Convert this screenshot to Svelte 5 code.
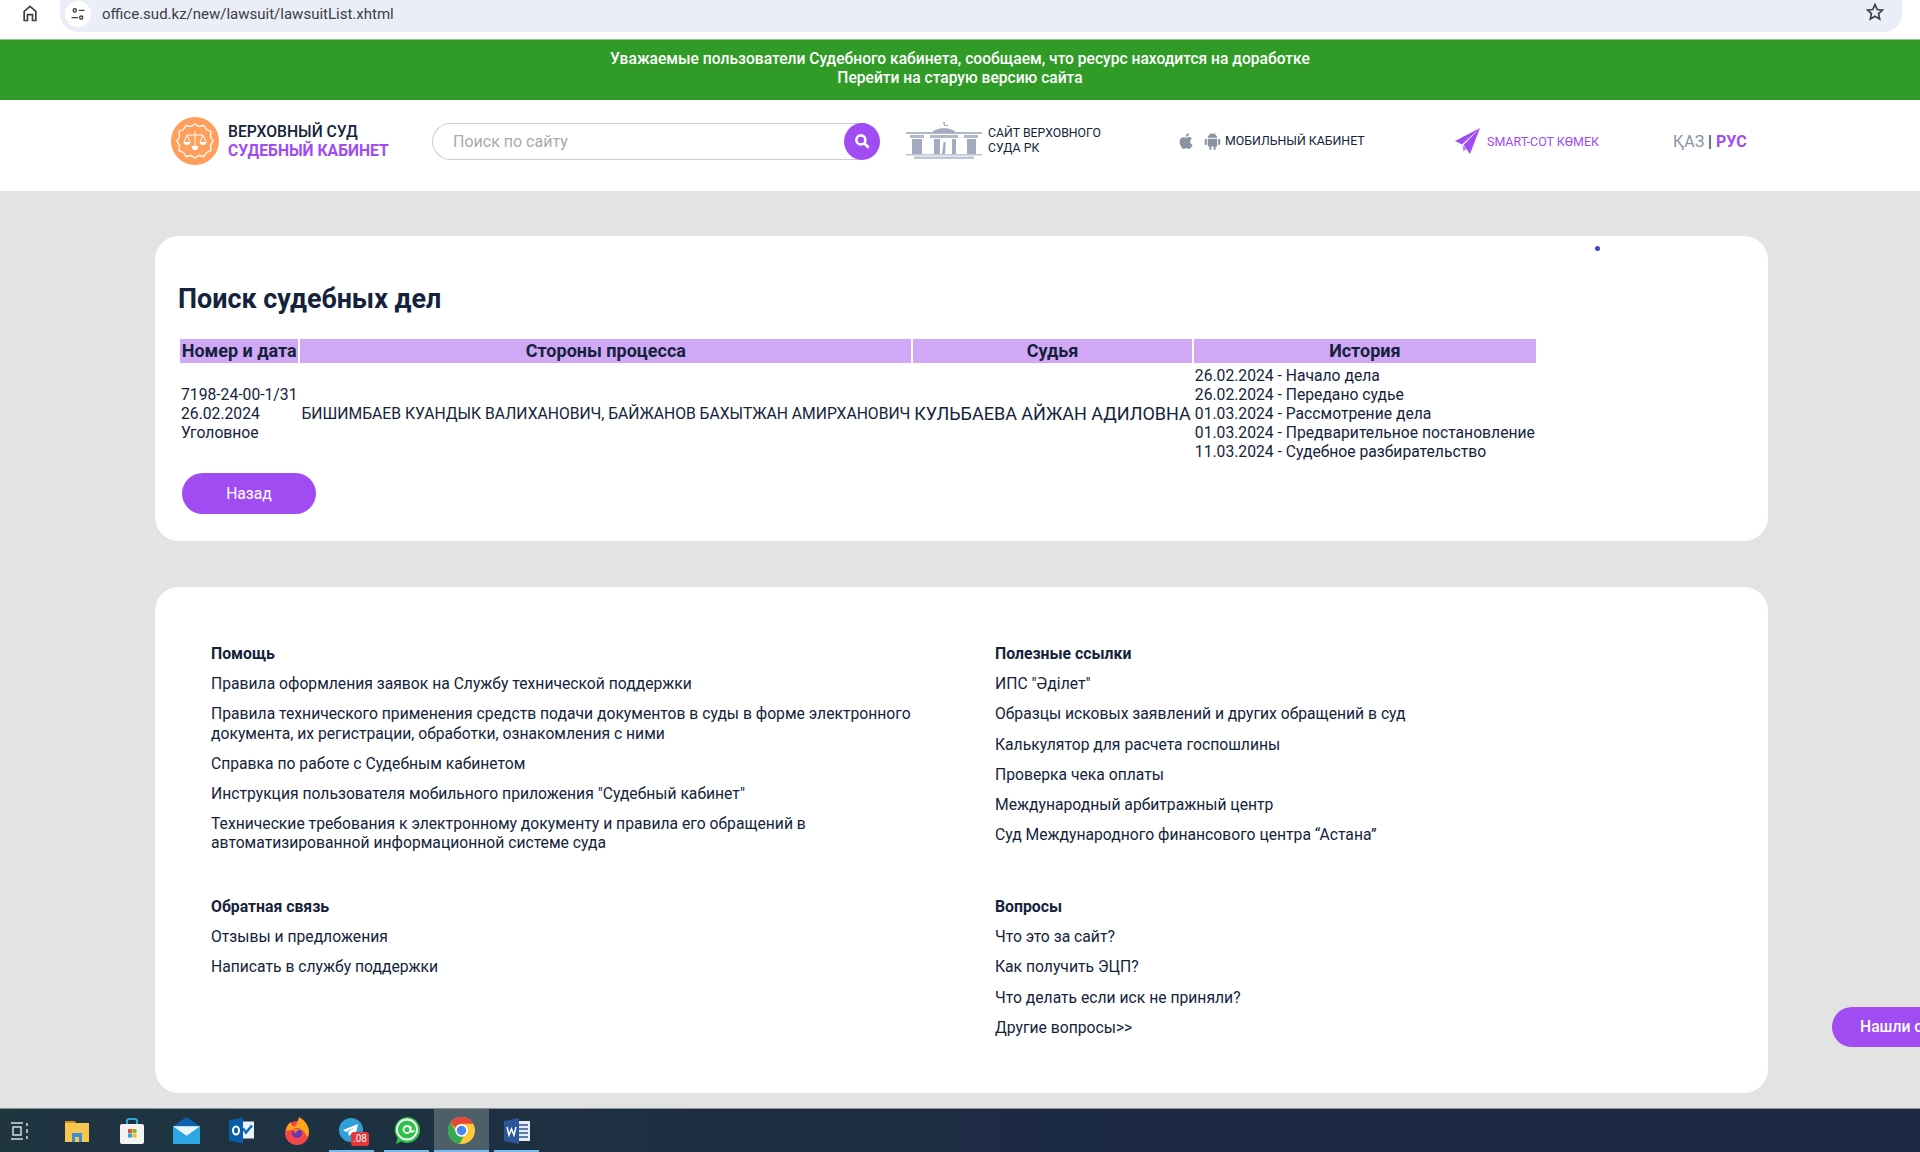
<script lang="ts">
  const help = [
    "Правила оформления заявок на Службу технической поддержки",
    "Правила технического применения средств подачи документов в суды в форме электронного документа, их регистрации, обработки, ознакомления с ними",
    "Справка по работе с Судебным кабинетом",
    'Инструкция пользователя мобильного приложения "Судебный кабинет"',
    "Технические требования к электронному документу и правила его обращений в автоматизированной информационной системе суда",
  ];
  const useful = [
    'ИПС "Әділет"',
    "Образцы исковых заявлений и других обращений в суд",
    "Калькулятор для расчета госпошлины",
    "Проверка чека оплаты",
    "Международный арбитражный центр",
    "Суд Международного финансового центра “Астана”",
  ];
  const feedback = ["Отзывы и предложения", "Написать в службу поддержки"];
  const questions = [
    "Что это за сайт?",
    "Как получить ЭЦП?",
    "Что делать если иск не приняли?",
    "Другие вопросы>>",
  ];
  const sections = [
    { title: "Помощь", links: help },
    { title: "Полезные ссылки", links: useful },
    { title: "Обратная связь", links: feedback },
    { title: "Вопросы", links: questions },
  ];
  const history = [
    "26.02.2024 - Начало дела",
    "26.02.2024 - Передано судье",
    "01.03.2024 - Рассмотрение дела",
    "01.03.2024 - Предварительное постановление",
    "11.03.2024 - Судебное разбирательство",
  ];
</script>

<div class="page">
  <div class="browser">
    <svg class="home" viewBox="0 0 24 24" width="20" height="20" fill="none" stroke="#3c4043" stroke-width="2">
      <path d="M5 21V10l7-6 7 6v11h-4v-7H9v7z" />
    </svg>
    <div class="address">
      <span class="site">
        <svg viewBox="0 0 20 20" width="16" height="16" fill="none" stroke="#3c4043" stroke-width="1.7">
          <circle cx="6" cy="5.5" r="2" />
          <path d="M11 5.500h7M2 14.500h8" />
          <circle cx="14" cy="14.5" r="2" />
        </svg>
      </span>
      <span class="url">office.sud.kz/new/lawsuit/lawsuitList.xhtml</span>
      <svg class="star" viewBox="0 0 24 24" width="20" height="20" fill="none" stroke="#3c4043" stroke-width="2">
        <path d="M12 3l2.700 6 6.300.7-4.700 4.300 1.300 6.400L12 17.200 6.400 20.400 7.700 14 3 9.700 9.300 9z" />
      </svg>
    </div>
  </div>

  <div class="banner">
    <div>Уважаемые пользователи Судебного кабинета, сообщаем, что ресурс находится на доработке</div>
    <div>Перейти на старую версию сайта</div>
  </div>

  <header>
    <svg class="logo" viewBox="0 0 48 48" width="48" height="48">
      <circle cx="24" cy="24" r="24" fill="#ff9f5c" />
      <path d="M24 7l4 2.500 5-1 2.500 4 4.500 2-.5 5L42 24l-2.500 4.500.5 5-4.500 2-2.500 4-5-1L24 41l-4-2.500-5 1-2.500-4-4.500-2 .5-5L6 24l2.500-4.500-.5-5 4.500-2 2.500-4 5 1z" fill="none" stroke="#fff" stroke-width="1.300" />
      <path d="M24 14v15M16 18h16M16 18l-3 7M16 18l3 7M32 18l-3 7M32 18l3 7" fill="none" stroke="#fff" stroke-width="1" />
      <path d="M12.500 25h7a3.500 3 0 0 1-7 0zM28.500 25h7a3.500 3 0 0 1-7 0zM20.500 29h7l-1.500 4h-4z" fill="#fff" />
    </svg>
    <div class="brand">
      <div>ВЕРХОВНЫЙ СУД</div>
      <div class="accent">СУДЕБНЫЙ КАБИНЕТ</div>
    </div>
    <div class="search">
      <span class="placeholder">Поиск по сайту</span>
      <span class="search-btn">
        <svg viewBox="0 0 24 24" width="18" height="18" fill="none" stroke="#fff" stroke-width="3.500">
          <circle cx="10.500" cy="10.500" r="6" />
          <path d="M15 15l6 6" />
        </svg>
      </span>
    </div>
    <svg class="building" viewBox="0 0 76 38" width="76" height="38" fill="#a3abc0">
      <path d="M37 0h2v3h3v1h-4zM27 9q11-6 22 0v2H27z" />
      <path d="M0 10h76v2H0zM4 13h14v3H4zM24 13h28v3H24zM58 13h14v3H58z" opacity=".85" />
      <path d="M6 17h10v15H6zM28 17h6v15h-6zM46 17h4v15h-4zM61 17h9v15h-9z" />
      <path d="M37.500 20h2v5l-.5 7h-3l1-7z" />
      <path d="M0 32h76v1.500H0zM8 34.500h60V37H8z" opacity=".7" />
    </svg>
    <div class="supreme">САЙТ ВЕРХОВНОГО<br />СУДА РК</div>
    <svg class="apple" viewBox="0 0 24 24" width="20" height="20" fill="#8a93a3">
      <path d="M17 12.600c0-2.300 1.900-3.400 2-3.500-1.100-1.600-2.800-1.800-3.400-1.800-1.400-.2-2.800.9-3.500.9s-1.900-.8-3.100-.8C7.400 7.400 6 8.300 5.200 9.700c-1.700 2.900-.4 7.100 1.200 9.500.8 1.100 1.700 2.400 3 2.300 1.200 0 1.600-.8 3.100-.8s1.800.8 3.100.7c1.300 0 2.100-1.100 2.900-2.300.9-1.300 1.300-2.600 1.300-2.700-.1 0-2.700-1-2.800-3.800zM14.600 5.600c.7-.8 1.100-1.900 1-3-.9 0-2.100.6-2.800 1.400-.6.700-1.100 1.800-1 2.900 1.100.1 2.100-.5 2.800-1.300z" />
    </svg>
    <svg class="android" viewBox="0 0 24 24" width="19" height="20" fill="#8a93a3">
      <path d="M6 9h12v9a1 1 0 0 1-1 1h-1v3a1.300 1.300 0 0 1-2.600 0v-3h-2.800v3A1.300 1.300 0 0 1 8 22v-3H7a1 1 0 0 1-1-1zM3.500 9A1.300 1.300 0 0 1 4.800 10.300v5.400a1.300 1.300 0 0 1-2.600 0v-5.400A1.300 1.300 0 0 1 3.500 9zM20.500 9a1.300 1.300 0 0 1 1.300 1.300v5.400a1.300 1.300 0 0 1-2.600 0v-5.400A1.300 1.300 0 0 1 20.500 9zM6 8c.1-2 1.200-3.600 2.900-4.500L8 2l.5-.4 1 1.500a7 7 0 0 1 5 0l1-1.500.5.400-.9 1.500C16.800 4.400 17.900 6 18 8z" />
    </svg>
    <span class="mobile">МОБИЛЬНЫЙ КАБИНЕТ</span>
    <svg class="plane" viewBox="0 0 26 26" width="26" height="26" fill="#a04cf2">
      <path d="M25 0L0 13l7 3.500z" />
      <path d="M25 0L8.500 17 15 26z" />
      <path d="M7.500 17.500l1 6 3-3z" opacity=".7" />
    </svg>
    <span class="smart">SMART-СОТ КӨМЕК</span>
    <span class="lang"><span class="kaz">ҚАЗ</span> | <b>РУС</b></span>
  </header>

  <main>
    <section class="card result">
      <i class="dot"></i>
      <h1>Поиск судебных дел</h1>
      <table>
        <thead>
          <tr>
            <th>Номер и дата</th>
            <th>Стороны процесса</th>
            <th>Судья</th>
            <th>История</th>
          </tr>
        </thead>
        <tbody>
          <tr>
            <td>7198-24-00-1/31<br />26.02.2024<br />Уголовное</td>
            <td>БИШИМБАЕВ КУАНДЫК ВАЛИХАНОВИЧ, БАЙЖАНОВ БАХЫТЖАН АМИРХАНОВИЧ</td>
            <td class="judge">КУЛЬБАЕВА АЙЖАН АДИЛОВНА</td>
            <td>
              {#each history as line}
                <div>{line}</div>
              {/each}
            </td>
          </tr>
        </tbody>
      </table>
      <button class="back">Назад</button>
    </section>

    <section class="card links">
      {#each sections as section}
        <div class="group">
          <h2>{section.title}</h2>
          {#each section.links as link}
            <a href="#top">{link}</a>
          {/each}
        </div>
      {/each}
    </section>
  </main>

  <div class="report">Нашли ошибку?</div>

  <footer>
    <svg class="tb-view" viewBox="0 0 20 20" width="20" height="20" fill="none" stroke="#d8dde2" stroke-width="1.500">
      <path d="M1 2h12M1 18h12M3 6h8v8H3z" />
      <path d="M17 2v3M17 8v4M17 15v3" />
    </svg>
    <span class="tb"><svg viewBox="0 0 26 26" width="26" height="26">
      <path d="M1 3h9l2 2h13v19H1z" fill="#f9c74f" />
      <path d="M1 3h9l2 2H1z" fill="#d9921a" />
      <path d="M8 15h10v9H8z" fill="#3a8fd6" />
      <path d="M11 19h4v5h-4z" fill="#f9c74f" />
    </svg></span>
    <span class="tb"><svg viewBox="0 0 26 26" width="26" height="28">
      <path d="M8 6V3q0-2 2-2h6q2 0 2 2v3" fill="none" stroke="#2ea8e0" stroke-width="2" />
      <rect x="1" y="6" width="24" height="20" rx="2" fill="#f3f3f3" />
      <path d="M9 11h4v4H9z" fill="#e8532b" />
      <path d="M13.500 11h4v4h-4z" fill="#7db928" />
      <path d="M9 15.500h4v4H9z" fill="#1ea5e8" />
      <path d="M13.500 15.500h4v4h-4z" fill="#fdb813" />
    </svg></span>
    <span class="tb"><svg viewBox="0 0 26 26" width="27" height="27">
      <path d="M13 0l13 9v17H0V9z" fill="#0d62ad" />
      <path d="M0 9h26v17H0z" fill="#2da7e3" />
      <path d="M0 9h26L13 18z" fill="#e9f6fd" />
    </svg></span>
    <span class="tb"><svg viewBox="0 0 26 26" width="26" height="27">
      <path d="M10 4h15v17H10z" fill="#e8f2fb" />
      <path d="M14 11l3 4 6-7" fill="none" stroke="#0e6cbc" stroke-width="2.500" />
      <path d="M0 3l14-3v26L0 23z" fill="#0a5dab" />
      <ellipse cx="7" cy="13" rx="3" ry="4" fill="none" stroke="#fff" stroke-width="2" />
    </svg></span>
    <span class="tb"><svg viewBox="0 0 26 28" width="26" height="28">
      <circle cx="13" cy="16" r="12" fill="#f0474c" />
      <path d="M2 14q1-7 5-9 0 4 3 5 3-2 5-10 9 5 10 14 0 4-2 6-3-9-11-8z" fill="#ffa41c" />
      <circle cx="13" cy="16" r="5" fill="#6a35b8" />
      <path d="M8 12q5-2 9 1-5 0-5 4z" fill="#ff7a1c" />
    </svg></span>
    <span class="tb tg"><svg viewBox="0 0 26 26" width="26" height="26">
      <circle cx="12" cy="12" r="12" fill="#2f9fda" />
      <path d="M4 12l15-6-3 13-4-3-2 2-1-4 7-5-9 5z" fill="#fff" />
    </svg><em>.08</em></span>
    <span class="tb"><svg viewBox="0 0 26 28" width="26" height="28">
      <path d="M13 0a13 13 0 1 1-6 24.500L2 27l1.500-6A13 13 0 0 1 13 0z" fill="#2fc24a" />
      <circle cx="13" cy="12.500" r="10" fill="none" stroke="#fff" stroke-width="1.800" />
      <circle cx="13" cy="12.500" r="3.500" fill="none" stroke="#fff" stroke-width="1.800" />
      <path d="M16.500 9v5q2.500 2 3.500-1" fill="none" stroke="#fff" stroke-width="1.800" />
    </svg></span>
    <span class="tb active"><svg viewBox="0 0 26 26" width="27" height="27">
      <circle cx="13" cy="13" r="13" fill="#ffc93a" />
      <path d="M13 0a13 13 0 0 1 11.300 6.500H13a6.500 6.500 0 0 0-6 4L2.500 5.300A13 13 0 0 1 13 0z" fill="#e8443a" />
      <path d="M2.500 5.300L8 14.500a6.500 6.500 0 0 0 7 4.500L11 26A13 13 0 0 1 2.500 5.300z" fill="#34a853" />
      <circle cx="13" cy="13" r="6" fill="#fff" />
      <circle cx="13" cy="13" r="4.500" fill="#4a86f0" />
    </svg></span>
    <span class="tb"><svg viewBox="0 0 26 26" width="26" height="26">
      <path d="M10 3h16v20H10z" fill="#e8eef8" />
      <path d="M15 7h9M15 11h9M15 15h9M15 19h9" stroke="#2b579a" stroke-width="1.500" />
      <path d="M0 3l15-3v26L0 23z" fill="#2b579a" />
      <path d="M3 9l2 8 2.500-6 2.500 6 2-8" fill="none" stroke="#fff" stroke-width="1.500" />
    </svg></span>
  </footer>
</div>

<style>
  :global(body) {
    margin: 0;
    background: #fff;
  }

  .page {
    position: relative;
    display: flex;
    flex-direction: column;
    height: 1152px;
    overflow: hidden;
    font-family: Roboto, "Liberation Sans", sans-serif;
    font-size: 15.7px;
    line-height: 19px;
    color: #14233b;
  }

  .browser {
    display: flex;
    align-items: flex-start;
    flex: none;
    height: 32px;
    margin-bottom: 7px;
    padding: 0 18px 0 20px;
  }
  .home {
    margin-top: 3px;
  }
  .address {
    display: flex;
    align-items: flex-start;
    flex: 1;
    height: 32px;
    margin-left: 20px;
    padding: 0 17px 0 5px;
    background: #ebeef8;
    border-radius: 0 0 18px 18px;
  }
  .site {
    display: flex;
    align-items: center;
    justify-content: center;
    width: 26px;
    height: 26px;
    margin: 1px 11px 0 0;
    background: #fff;
    border-radius: 50%;
  }
  .url {
    flex: 1;
    margin-top: 5px;
    color: #3c4043;
    font-size: 15px;
  }
  .star {
    margin-top: 2px;
  }

  .banner {
    flex: none;
    height: 61px;
    padding-top: 10px;
    box-sizing: border-box;
    background: #319b28;
    border-top: 1px solid #8fc98a;
    color: #fff;
    font-size: 15.6px;
    font-weight: 500;
    text-align: center;
  }

  header {
    display: flex;
    align-items: center;
    flex: none;
    box-sizing: border-box;
    height: 91px;
    padding: 0 0 9px 171px;
    color: #14233b;
  }
  .logo {
    flex: none;
    margin-right: 9px;
  }
  .brand {
    width: 204px;
    font-size: 15.7px;
    font-weight: 500;
  }
  .brand .accent {
    color: #a04cf2;
    font-weight: 700;
  }
  .search {
    display: flex;
    align-items: center;
    justify-content: space-between;
    flex: none;
    box-sizing: border-box;
    width: 448px;
    height: 37px;
    padding-left: 20px;
    border: 1.5px solid #c8cbe4;
    border-right: 0;
    border-radius: 19px;
  }
  .placeholder {
    color: #aaa;
    font-size: 16px;
  }
  .search-btn {
    display: flex;
    align-items: center;
    justify-content: center;
    width: 36px;
    height: 37px;
    margin: -2px 0;
    background: #a04cf2;
    border-radius: 50%;
  }
  .building {
    flex: none;
    margin-left: 26px;
    margin-right: 6px;
  }
  .supreme {
    width: 188px;
    font-size: 12.3px;
    line-height: 15px;
  }
  .android {
    margin: 0 0 0 7px;
  }
  .mobile {
    width: 230px;
    margin-left: 3px;
    font-size: 12.35px;
  }
  .plane {
    flex: none;
    margin-right: 6px;
  }
  .smart {
    width: 186px;
    color: #a04cf2;
    font-size: 12.45px;
  }
  .lang {
    font-size: 16px;
  }
  .kaz {
    color: #8a93a3;
  }
  .lang b {
    color: #a04cf2;
  }

  main {
    flex: 1;
    min-height: 0;
    padding: 45px 0 0 155px;
    background: #e3e3e3;
  }
  .card {
    position: relative;
    box-sizing: border-box;
    width: 1613px;
    background: #fff;
    border-radius: 24px;
  }
  .result {
    height: 305px;
    margin-bottom: 46px;
    padding: 46px 23px 0;
  }
  .dot {
    position: absolute;
    top: 10px;
    left: 1440px;
    width: 5px;
    height: 5px;
    background: #3b46c8;
    border-radius: 50%;
  }
  h1 {
    margin: 0 0 20px;
    font-size: 26.9px;
    line-height: 35px;
    font-weight: 700;
  }
  table {
    border-spacing: 2px;
  }
  th {
    padding: 0 1px;
    background: #d0a8f6;
    font-size: 18px;
    line-height: 24px;
    font-weight: 700;
  }
  td {
    padding: 1px;
  }
  .judge {
    font-size: 18px;
    white-space: nowrap;
  }
  .back {
    display: block;
    width: 134px;
    height: 41px;
    margin: 9px 0 0 4px;
    padding: 0;
    background: #a04cf2;
    border: 0;
    border-radius: 21px;
    color: #fff;
    font: inherit;
  }

  .links {
    display: grid;
    grid-template-columns: 784px 1fr;
    grid-template-rows: 253px auto;
    height: 506px;
    padding: 57px 0 0 56px;
    line-height: 19.2px;
  }
  h2 {
    margin: 0 0 11px;
    font-size: 15.8px;
    line-height: 19.2px;
    font-weight: 700;
  }
  .group a {
    display: block;
    max-width: 712px;
    margin-bottom: 11px;
    color: #14233b;
    text-decoration: none;
  }

  .report {
    position: absolute;
    top: 1007px;
    left: 1832px;
    width: 160px;
    height: 40px;
    padding-left: 28px;
    background: #a04cf2;
    border-radius: 20px;
    color: #fff;
    line-height: 40px;
    font-weight: 500;
  }

  footer {
    display: flex;
    align-items: stretch;
    flex: none;
    height: 44px;
    padding-left: 10px;
    box-sizing: border-box;
    background: linear-gradient(90deg, #1f3540, #1c2a44 60%);
    border-top: 1px solid #8d9196;
  }
  .tb-view {
    align-self: center;
    width: 20px;
    margin-right: 19px;
  }
  .tb {
    position: relative;
    display: flex;
    align-items: center;
    justify-content: center;
    width: 55px;
  }
  .tb.active {
    background: #4d5f68;
  }
  .tb:nth-of-type(6)::after,
  .tb:nth-of-type(7)::after,
  .tb:nth-of-type(8)::after,
  .tb:nth-of-type(9)::after {
    content: "";
    position: absolute;
    left: 5px;
    right: 5px;
    bottom: 0;
    height: 2px;
    background: #76b9ed;
  }
  .tb.active::after {
    left: 0;
    right: 0;
  }
  .tg em {
    position: absolute;
    left: 27px;
    top: 23px;
    width: 18px;
    height: 14px;
    background: #e8343a;
    border-radius: 3px;
    color: #fff;
    font-size: 10px;
    font-style: normal;
    line-height: 14px;
    text-align: center;
  }
</style>
